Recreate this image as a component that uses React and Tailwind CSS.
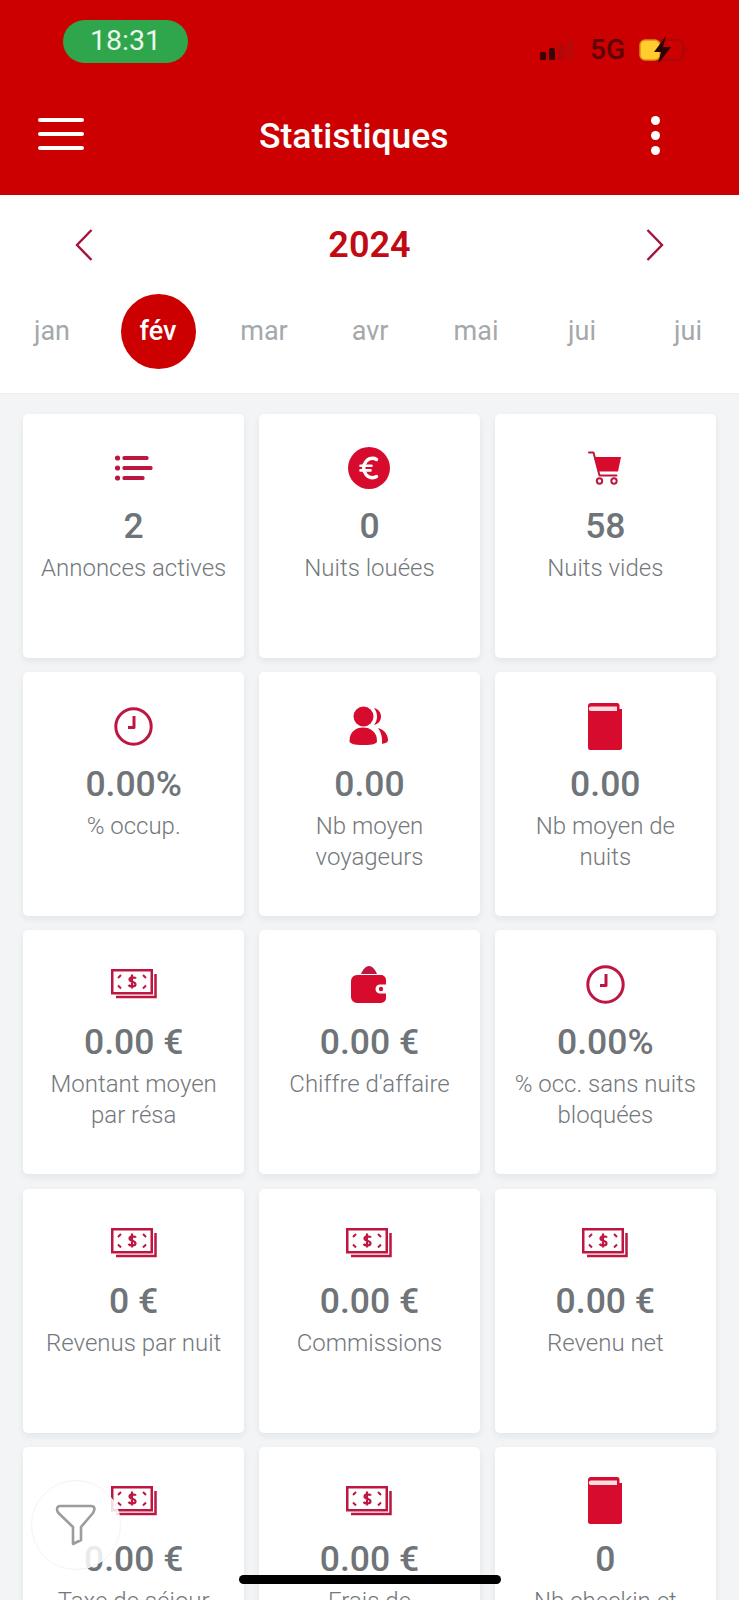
import React from "react";

const FILL = "#d60b2e";
const LINE = "#bd1640";

function ListIcon() {
    return (
        <svg width="38" height="26" viewBox="0 0 38 26" fill={LINE}>
            <circle cx="2.5" cy="3" r="2.6" />
            <circle cx="2.5" cy="13" r="2.6" />
            <circle cx="2.5" cy="23" r="2.6" />
            <rect x="7.5" y="1" width="26" height="4" rx="1.5" />
            <rect x="7.5" y="11" width="30" height="4" rx="1.5" />
            <rect x="7.5" y="21" width="22" height="4" rx="1.5" />
        </svg>
    );
}

function EuroIcon() {
    return (
        <svg width="42" height="42" viewBox="0 0 42 42">
            <circle cx="21" cy="21" r="21" fill={FILL} />
            <path d="M28.500 12.500c-1.200-.8-2.600-1.200-4-1.200a8.800 9.700 0 0 0 0 19.400c1.400 0 2.800-.4 4-1.200" fill="none" stroke="#fff" strokeWidth="3.400" strokeLinecap="round" />
            <path d="M12.500 18.800h11M12.500 23.400h10" fill="none" stroke="#fff" strokeWidth="2.600" strokeLinecap="round" />
        </svg>
    );
}

function CartIcon() {
    return (
        <svg width="34" height="34" viewBox="0 0 34 34">
            <path d="M1 1.500h4.500l6 23h17" fill="none" stroke={LINE} strokeWidth="2" strokeLinecap="round" strokeLinejoin="round" />
            <path d="M7 6h26l-3 14.500H10.500z" fill={FILL} />
            <circle cx="11.500" cy="30" r="2.700" fill="none" stroke={LINE} strokeWidth="2" />
            <circle cx="26" cy="30" r="2.700" fill="none" stroke={LINE} strokeWidth="2" />
        </svg>
    );
}

function ClockIcon() {
    return (
        <svg width="39" height="39" viewBox="0 0 39 39" fill="none" stroke={LINE}>
            <circle cx="19.500" cy="19.500" r="17.700" strokeWidth="3" />
            <path d="M20 9v11.500h-6" strokeWidth="3" strokeLinejoin="round" />
        </svg>
    );
}

function UsersIcon() {
    return (
        <svg width="40" height="40" viewBox="0 0 40 40" fill={FILL}>
            <circle cx="14.500" cy="10.500" r="10" />
            <path d="M0.500 35c0-9 6-13.500 13.500-13.500S28 26 28 35c0 2.500-3.500 4-13.500 4S.5 37.500.5 35z" />
            <path d="M25 2c4.500 1 7 4.500 7 8.500s-2.500 7.500-7 8.500c2-2.500 3-5.500 3-8.500s-1-6-3-8.500z" />
            <path d="M29 22c6 1.500 10 6.500 10 12 0 2-1.500 3-6 4 .5-6-.5-11-4-16z" />
        </svg>
    );
}

function BookIcon() {
    return (
        <svg width="34" height="47" viewBox="0 0 34 47">
            <path d="M3 0h26a2.500 2.500 0 0 1 2.500 2.500V6H34v38.500a2.500 2.500 0 0 1-2.500 2.500h-29A2.500 2.500 0 0 1 0 44.500V3a3 3 0 0 1 3-3z" fill={FILL} />
            <path d="M3 3.500h26v4.500H3a2.250 2.250 0 0 1 0-4.500z" fill="#f7dde2" />
        </svg>
    );
}

function MoneyIcon() {
    return (
        <svg width="46" height="30" viewBox="0 0 46 30" fill="none" stroke={LINE}>
            <rect x="1.250" y="1.250" width="39.500" height="23" strokeWidth="2.500" />
            <path d="M44.500 5v23H5" strokeWidth="2.500" />
            <path d="M7 9l3-3M7 16.500l3 3M35 9l-3-3M35 16.500l-3 3" strokeWidth="2" />
            <path d="M25 9.500c-1-1.500-6.500-2-6.500 1 0 3 6 1.500 6 4.800 0 3-5.500 2.700-7 .7M21 5.500v14" strokeWidth="2.200" />
        </svg>
    );
}

function WalletIcon() {
    return (
        <svg width="36" height="37" viewBox="0 0 36 37">
            <path d="M10 8c2-5 5-8 8-8s6 3 8 8z" fill={LINE} />
            <path d="M6 9h24a5 5 0 0 1 5 5v4.500h-6a4.500 4.500 0 0 0 0 9h6V32a5 5 0 0 1-5 5H6a6 6 0 0 1-6-6V15a6 6 0 0 1 6-6z" fill={FILL} />
            <circle cx="30" cy="23" r="2.200" fill={FILL} />
        </svg>
    );
}

const icons = {
    list: ListIcon,
    euro: EuroIcon,
    cart: CartIcon,
    clock: ClockIcon,
    users: UsersIcon,
    book: BookIcon,
    money: MoneyIcon,
    wallet: WalletIcon,
};

const stats = [
    { icon: "list", value: "2", label: "Annonces actives" },
    { icon: "euro", value: "0", label: "Nuits louées" },
    { icon: "cart", value: "58", label: "Nuits vides" },
    { icon: "clock", value: "0.00%", label: "% occup." },
    { icon: "users", value: "0.00", label: "Nb moyen voyageurs" },
    { icon: "book", value: "0.00", label: "Nb moyen de nuits" },
    { icon: "money", value: "0.00 €", label: "Montant moyen par résa" },
    { icon: "wallet", value: "0.00 €", label: "Chiffre d'affaire" },
    { icon: "clock", value: "0.00%", label: "% occ. sans nuits bloquées" },
    { icon: "money", value: "0 €", label: "Revenus par nuit" },
    { icon: "money", value: "0.00 €", label: "Commissions" },
    { icon: "money", value: "0.00 €", label: "Revenu net" },
    { icon: "money", value: "0.00 €", label: "Taxe de séjour" },
    { icon: "money", value: "0.00 €", label: "Frais de\nménage" },
    { icon: "book", value: "0", label: "Nb checkin et checkout" },
];

const months = ["jan", "fév", "mar", "avr", "mai", "jui", "jui"];

function StatCard({ icon, value, label }) {
    const Icon = icons[icon];
    return (
        <div className="flex h-[244px] flex-col items-center rounded-[5px] bg-white px-4 pt-[30px] shadow-[0_3px_7px_rgba(30,40,50,0.07)]">
            <div className="flex h-[48px] items-center justify-center">
                <Icon />
            </div>
            <div className="mt-[12px] text-[35.500px] leading-[44px] font-medium text-[#6f7478]">{value}</div>
            <div className="mt-[5px] text-center text-[24px] leading-[30.500px] font-light whitespace-pre-line text-[#74787c]">{label}</div>
        </div>
    );
}

function StatusBar() {
    return (
        <div className="flex h-[85px] items-start pt-5 pl-[63px]">
            <div className="flex h-[43px] w-[125px] items-center justify-center rounded-[22px] bg-[#2fa64c] text-[28.500px] text-[#e9f7ec]">18:31</div>
            <div className="mt-[16px] ml-auto mr-[50px] flex items-center">
                <svg width="38" height="20" viewBox="0 0 38 20" className="mr-[12px]">
                    <rect x="0" y="12" width="6" height="8" rx="1.500" fill="#3a0505" />
                    <rect x="9" y="8" width="6" height="12" rx="1.500" fill="#3a0505" />
                    <rect x="18" y="4" width="6" height="16" rx="1.500" fill="#b30808" />
                    <rect x="27" y="0" width="6" height="20" rx="1.500" fill="#b80808" />
                </svg>
                <span className="text-[28px] leading-[24px] font-medium text-[#5c0404]">5G</span>
                <svg width="50" height="28" viewBox="0 0 50 28" className="ml-[14px]">
                    <rect x="1" y="4" width="43" height="20" rx="6" fill="none" stroke="#a80808" strokeWidth="2" />
                    <rect x="1" y="4" width="20" height="20" rx="5" fill="#ffce2e" stroke="#e08a10" strokeWidth="1.500" />
                    <path d="M46 11v6c1.500-.5 2.500-1.500 2.500-3s-1-2.500-2.500-3z" fill="#a80808" />
                    <path d="M27 0L15 16h7l-3 12 13-17h-8z" fill="#2a0303" />
                </svg>
            </div>
        </div>
    );
}

function NavBar() {
    return (
        <div className="flex h-[100px] items-start pt-[31px] pl-[38px]">
            <div className="mt-[2px] flex h-[32px] w-[46px] flex-col justify-between">
                <span className="h-1 rounded-full bg-white" />
                <span className="h-1 rounded-full bg-white" />
                <span className="h-1 rounded-full bg-white" />
            </div>
            <h1 className="mt-[2px] ml-[175px] text-[35.500px] leading-[36px] font-medium text-white">Statistiques</h1>
            <div className="ml-auto mr-[79px] flex h-[39px] flex-col justify-between">
                <span className="h-[9px] w-[9px] rounded-full bg-white" />
                <span className="h-[9px] w-[9px] rounded-full bg-white" />
                <span className="h-[9px] w-[9px] rounded-full bg-white" />
            </div>
        </div>
    );
}

function Chevron({ flip }) {
    return (
        <svg width="18" height="32" viewBox="0 0 18 32" fill="none" stroke="#a5123a" strokeWidth="2.400" className={flip ? "rotate-180" : ""}>
            <path d="M16.500 1L2 16l14.500 15" />
        </svg>
    );
}

function DateSelector() {
    return (
        <div className="h-[199px] border-b border-[#eceef0] bg-white">
            <div className="flex h-[99px] items-center justify-between pr-[75px] pl-[75px]">
                <Chevron />
                <span className="text-[36px] font-semibold text-[#c20a14]">2024</span>
                <Chevron flip />
            </div>
            <div className="-ml-px flex w-[742px]">
                {months.map((m, i) => (
                    <div key={i} className="flex h-[75px] flex-1 items-center justify-center">
                        {i === 1 ? (
                            <span className="flex h-[75px] w-[75px] items-center justify-center rounded-full bg-[#cc0000] text-[27px] font-medium text-white">{m}</span>
                        ) : (
                            <span className="text-[27px] text-[#a3a8ac]">{m}</span>
                        )}
                    </div>
                ))}
            </div>
        </div>
    );
}

export default function App() {
    return (
        <div className="relative h-[1600px] w-[739px] overflow-hidden bg-[#f2f4f6] font-[Roboto,sans-serif]">
            <header className="h-[195px] bg-[#cc0000]">
                <StatusBar />
                <NavBar />
            </header>
            <DateSelector />
            <main className="grid grid-cols-3 gap-x-[14.500px] gap-y-[14.200px] px-[23px] pt-[20px]">
                {stats.map((s, i) => (
                    <StatCard key={i} {...s} />
                ))}
            </main>
            <button className="absolute top-[1480px] left-[31px] flex h-[90px] w-[90px] items-center justify-center rounded-full border border-[#f3f3f3] bg-white/85" aria-label="Filtrer">
                <svg width="42" height="42" viewBox="0 0 42 42" fill="none" stroke="#9a9c9e" strokeWidth="2.600" strokeLinejoin="round">
                    <path d="M2 5c0-2 1.500-3 3-3h31c2 0 3.500 1 3.500 3 0 1-.5 2-1.500 4L26 23v13l-8 4V23L3.500 9C2.500 8 2 6.500 2 5z" />
                </svg>
            </button>
            <div className="absolute top-[1575px] left-[239px] h-[9px] w-[262px] rounded-full bg-black" />
        </div>
    );
}
